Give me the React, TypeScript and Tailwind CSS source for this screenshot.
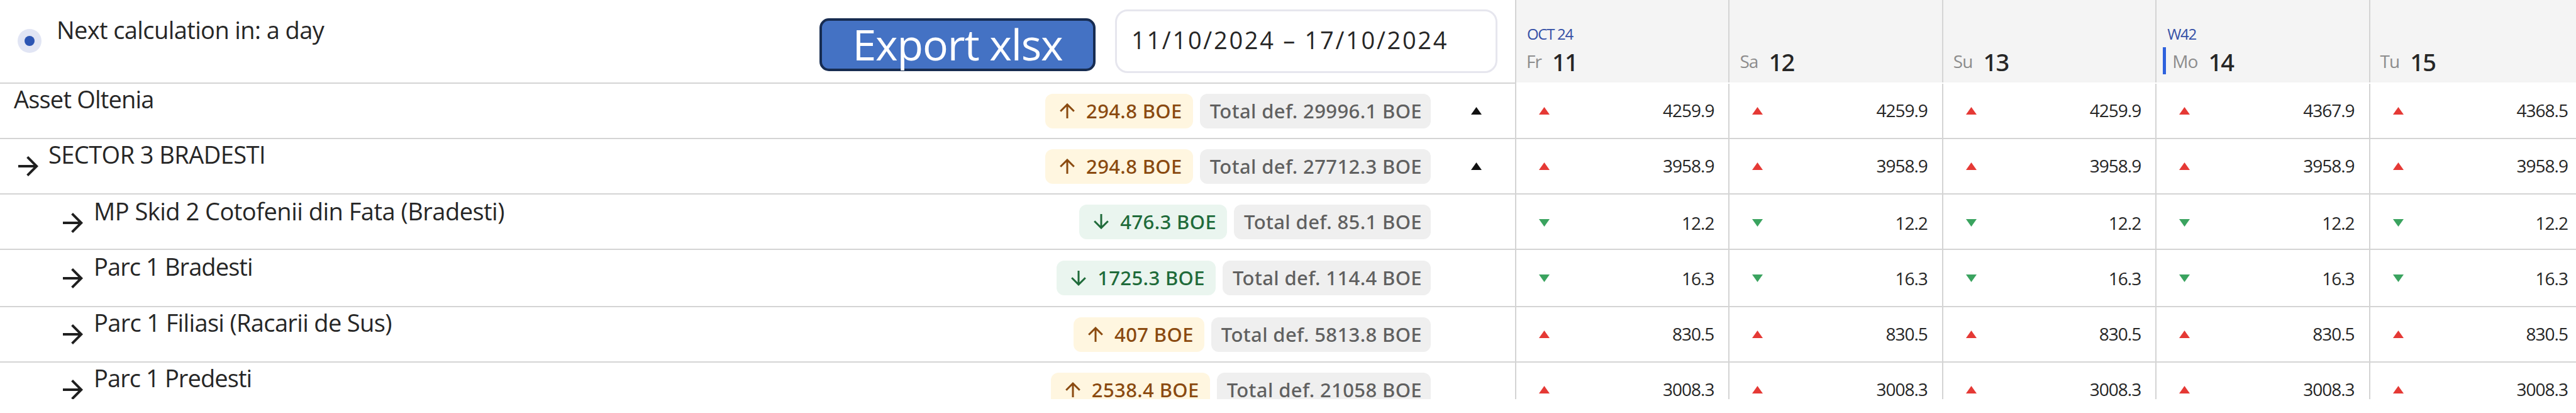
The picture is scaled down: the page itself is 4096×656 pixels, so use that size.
import React from 'react';
import clsx from 'clsx';

type Trend = 'up' | 'down';

interface AssetRow {
  name: string;
  level: number;
  trend: Trend;
  delta: string;
  total: string;
  collapsible?: boolean;
  values: string[];
  heightClass: string;
  nameClass: string;
  valueClass: string;
  markClass?: string;
}

interface Day {
  label?: string;
  weekday: string;
  day: string;
  weekStart?: boolean;
}

const days: Day[] = [
  { label: 'OCT 24', weekday: 'Fr', day: '11' },
  { weekday: 'Sa', day: '12' },
  { weekday: 'Su', day: '13' },
  { label: 'W42', weekday: 'Mo', day: '14', weekStart: true },
  { weekday: 'Tu', day: '15' },
];

const repeat = (value: string) => days.map(() => value);

const rows: AssetRow[] = [
  {
    name: 'Asset Oltenia',
    level: 0,
    trend: 'up',
    delta: '294.8 BOE',
    total: '29996.1 BOE',
    collapsible: true,
    values: ['4259.9', '4259.9', '4259.9', '4367.9', '4368.5'],
    heightClass: 'h-[88px]',
    nameClass: 'tracking-[-0.8px]',
    valueClass: 'pb-[2px]',
  },
  {
    name: 'SECTOR 3 BRADESTI',
    level: 1,
    trend: 'up',
    delta: '294.8 BOE',
    total: '27712.3 BOE',
    collapsible: true,
    values: repeat('3958.9'),
    heightClass: 'h-[88px]',
    nameClass: 'tracking-[-0.55px]',
    valueClass: 'pb-[2px]',
  },
  {
    name: 'MP Skid 2 Cotofenii din Fata (Bradesti)',
    level: 2,
    trend: 'down',
    delta: '476.3 BOE',
    total: '85.1 BOE',
    values: repeat('12.2'),
    heightClass: 'h-[88px]',
    nameClass: 'pt-[2px] tracking-[-0.5px]',
    valueClass: 'pt-[4px]',
    markClass: 'pt-[3px]',
  },
  {
    name: 'Parc 1 Bradesti',
    level: 2,
    trend: 'down',
    delta: '1725.3 BOE',
    total: '114.4 BOE',
    values: repeat('16.3'),
    heightClass: 'h-[91px]',
    nameClass: 'pt-[2px] tracking-[-0.9px]',
    valueClass: '',
  },
  {
    name: 'Parc 1 Filiasi (Racarii de Sus)',
    level: 2,
    trend: 'up',
    delta: '407 BOE',
    total: '5813.8 BOE',
    values: repeat('830.5'),
    heightClass: 'h-[88px]',
    nameClass: 'tracking-[-0.65px]',
    valueClass: 'pb-[2px]',
  },
  {
    name: 'Parc 1 Predesti',
    level: 2,
    trend: 'up',
    delta: '2538.4 BOE',
    total: '21058 BOE',
    values: repeat('3008.3'),
    heightClass: 'h-[88px]',
    nameClass: 'tracking-[-0.9px]',
    valueClass: 'pb-[2px]',
  },
];

const ArrowForward = () => (
  <svg className="size-12 shrink-0" viewBox="0 0 24 24" fill="#1f1f1f">
    <path d="M12 4l-1.41 1.41L16.17 11H4v2h12.17l-5.58 5.59L12 20l8-8z" />
  </svg>
);

const TrendArrow: React.FC<{ trend: Trend }> = ({ trend }) => (
  <svg
    className={clsx('size-6 shrink-0', trend === 'down' && 'rotate-180')}
    viewBox="0 0 24 24"
    fill="none"
    stroke="currentColor"
    strokeWidth="3"
  >
    <path d="M12 24V2M1.2 12.8L12 2l10.8 10.8" />
  </svg>
);

const Triangle: React.FC<{ className?: string }> = ({ className }) => (
  <svg className={clsx('h-3 w-[17px] shrink-0', className)} viewBox="0 0 17 12" fill="currentColor">
    <path d="M8.5 0L17 12H0z" />
  </svg>
);

const Chips: React.FC<{ row: AssetRow }> = ({ row }) => (
  <div className="flex shrink-0 items-center gap-[11px] font-['Noto_Sans',sans-serif] text-[31px] font-medium tracking-[0.38px]">
    <div
      className={clsx(
        'flex h-[55px] items-center gap-[18px] rounded-xl pr-[17px] pl-[23px]',
        row.trend === 'up' ? 'bg-[#fff6e0] text-[#8a4a10]' : 'bg-[#eaf5ef] text-[#1f6b3a]'
      )}
    >
      <TrendArrow trend={row.trend} />
      <span>{row.delta}</span>
    </div>
    <div className="flex h-[55px] items-center rounded-xl bg-[#efefef] pr-[14px] pl-4 text-[#606060]">
      Total def. {row.total}
    </div>
  </div>
);

const NameCell: React.FC<{ row: AssetRow }> = ({ row }) => (
  <div className={clsx('flex items-center justify-between border-b-2 border-[#d4d4d4]', row.heightClass)}>
    <div
      className={clsx(
        'flex h-full items-start',
        row.level === 0 && 'pl-[22px]',
        row.level === 1 && 'gap-2 pl-[21px]',
        row.level === 2 && 'gap-[9px] pl-[92px]',
        row.nameClass
      )}
    >
      {row.level > 0 && (
        <div className="flex h-[86px] items-center">
          <ArrowForward />
        </div>
      )}
      <span className="text-[38px] leading-[48px]">{row.name}</span>
    </div>
    <div className="flex items-center">
      <Chips row={row} />
      <div className="w-[134px] pl-[64px]">
        {row.collapsible && <Triangle className="text-[#111111]" />}
      </div>
    </div>
  </div>
);

const DayHeader: React.FC<{ item: Day }> = ({ item }) => (
  <div className="flex h-full w-[339.4px] shrink-0 flex-col justify-end border-r-2 border-[#d4d4d4] pb-[13px]">
    <div className="mb-[7px] h-7 pl-[17px] text-2xl leading-7 tracking-[-1.3px] text-[#3550a6]">{item.label}</div>
    <div className={clsx('flex h-[43px] items-center', item.weekStart ? 'pl-[10px]' : 'pl-4')}>
      {item.weekStart && <div className="mr-[10px] h-full w-[5px] bg-[#2f62dd]" />}
      <span className="text-[28px] tracking-[-0.9px] text-[#8c8c8c]">{item.weekday}</span>
      <span className="pt-[3px] pl-[17px] font-['Noto_Sans',sans-serif] text-[38px] leading-[44px] font-medium tracking-[-1.8px]">
        {item.day}
      </span>
    </div>
  </div>
);

const ValueRow: React.FC<{ row: AssetRow }> = ({ row }) => (
  <div className={clsx('flex border-b-2 border-[#d4d4d4]', row.heightClass)}>
    {row.values.map((value, index) => (
      <div
        key={index}
        className="flex w-[339.4px] shrink-0 items-center justify-between border-r-2 border-[#d4d4d4] pr-[23px] pl-9"
      >
        <div className={row.markClass}>
          <Triangle className={row.trend === 'up' ? 'text-[#e53935]' : 'rotate-180 text-[#3aa35f]'} />
        </div>
        <span className={clsx('text-[28px] tracking-[-1px]', row.valueClass)}>{value}</span>
      </div>
    ))}
  </div>
);

export default function App() {
  return (
    <div className="h-[656px] w-[4096px] overflow-hidden bg-white font-['Open_Sans',sans-serif] text-[#262626]">
      <div className="flex h-[634px] overflow-hidden whitespace-nowrap">
        {/* Asset tree */}
        <div className="h-[722px] w-[2411px] shrink-0 border-r-2 border-[#d4d4d4]">
          <div className="flex h-[133px] items-start justify-between border-b-2 border-[#d4d4d4] pr-[28px]">
            <div className="flex items-start pl-7">
              <div className="mt-[46px] flex size-[38px] items-center justify-center rounded-full bg-[#e1e5f4]">
                <div className="size-4 rounded-full bg-[#2c55b3]" />
              </div>
              <span className="mt-[23px] ml-6 text-[38px] leading-[48px] tracking-[-0.6px]">
                Next calculation in: a day
              </span>
            </div>
            <div className="flex items-start gap-[31px]">
              <button className="mt-[29px] flex h-[84px] w-[439px] items-center justify-center rounded-[15px] border-4 border-[#172c51] bg-[#4472c4] pb-[2px] text-[68px] leading-none tracking-[-1.1px] text-white">
                Export xlsx
              </button>
              <div className="mt-[15px] flex h-[101px] w-[608px] items-center rounded-[20px] border-[3px] border-[#e6e6ee] pb-[4px] pl-[23px] text-[38px] tracking-[2.7px]">
                11/10/2024 – 17/10/2024
              </div>
            </div>
          </div>
          {rows.map((row) => (
            <NameCell key={row.name} row={row} />
          ))}
        </div>

        {/* Daily values */}
        <div className="h-[722px] flex-1 overflow-hidden">
          <div className="mb-[2px] flex h-[131px] bg-[#f4f4f4]">
            {days.map((item) => (
              <DayHeader key={item.day} item={item} />
            ))}
          </div>
          {rows.map((row) => (
            <ValueRow key={row.name} row={row} />
          ))}
        </div>
      </div>
    </div>
  );
}
